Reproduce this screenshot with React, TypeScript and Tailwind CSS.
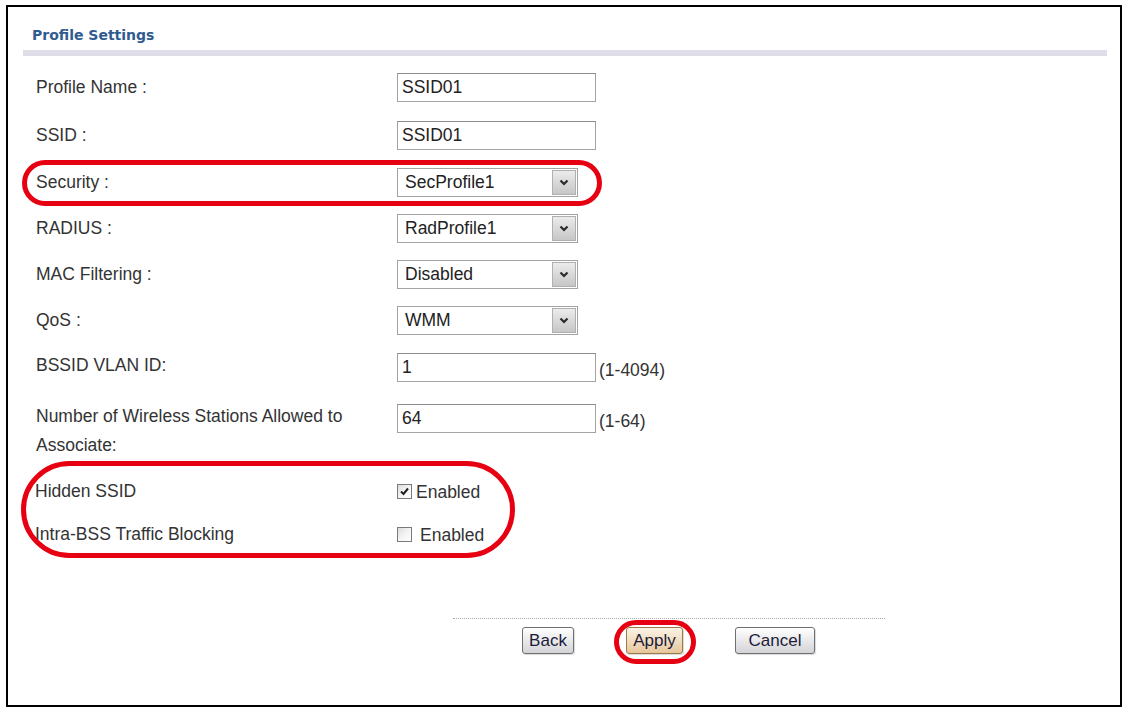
import React from "react";

const label = "w-[374px] shrink-0 pl-[13px] pr-[30px] leading-[29px] text-[#333]";

function TextBox({ value, note }: { value: string; note?: string }) {
  return (
    <div className="flex items-center">
      <div className="w-[199px] h-[29px] border border-[#a3a3a3] border-t-[#8c8c8c] bg-white pl-[4px] leading-[27px] text-[#222]">
        {value}
      </div>
      {note && <span className="ml-[3px] mt-[6px] text-[#333]">{note}</span>}
    </div>
  );
}

function Select({ value }: { value: string }) {
  return (
    <div className="w-[181px] h-[29px] border border-[#a3a3a3] bg-white flex items-center justify-between pl-[7px] pr-[1px]">
      <span className="text-[#222]">{value}</span>
      <span className="w-[24px] h-[25px] border border-[#b0b0b0] bg-gradient-to-b from-[#ececec] to-[#c6c6c6] flex items-center justify-center">
        <svg width="10" height="7" viewBox="0 0 10 7">
          <polyline points="1.5,1.5 5,5 8.5,1.5" fill="none" stroke="#2a2a2a" strokeWidth="2.2" />
        </svg>
      </span>
    </div>
  );
}

function CheckBox({ checked, gap }: { checked?: boolean; gap: string }) {
  return (
    <div className="flex items-center h-[29px]">
      <span className="w-[15px] h-[15px] border border-[#7a7a7a] bg-gradient-to-br from-[#dcdcdc] via-[#f4f4f4] to-white flex items-center justify-center">
        {checked && (
          <svg width="11" height="11" viewBox="0 0 11 11">
            <polyline points="2,5.5 4.5,8 9,2.5" fill="none" stroke="#222" strokeWidth="2" />
          </svg>
        )}
      </span>
      <span className={`${gap} text-[#333]`}>Enabled</span>
    </div>
  );
}

function PushButton({ text, width, apply }: { text: string; width: string; apply?: boolean }) {
  return (
    <button
      className={`${width} h-[27px] rounded-[3px] border text-[17px] leading-[25px] text-[#1c1c3a] shadow-[1px_1px_1px_rgba(0,0,0,0.15)] ${
        apply
          ? "border-[#9a7a4a] bg-gradient-to-b from-[#fbf3e6] to-[#e6c79a]"
          : "border-[#6f6f6f] bg-gradient-to-b from-[#ffffff] to-[#d4d4d8]"
      }`}
    >
      {text}
    </button>
  );
}

export default function App() {
  return (
    <div className="w-[1126px] h-[712px] bg-white overflow-hidden font-['Liberation_Sans',Arial,sans-serif] text-[17.5px]">
      <div className="relative ml-[6px] mt-[5px] w-[1116px] h-[702px] border-2 border-black pl-[15px] pr-[13px] pt-[20px]">
        <h1 className="pl-[9px] font-['DejaVu_Sans',Verdana,sans-serif] text-[14px] leading-[16px] font-bold text-[#2f5b91]">
          Profile Settings
        </h1>
        <div className="mt-[7px] h-[6px] bg-[#dedde8]" />

        <div className="flex flex-col">
          <div className="flex items-start mt-[17px]">
            <div className={label}>Profile Name :</div>
            <TextBox value="SSID01" />
          </div>
          <div className="flex items-start mt-[19px]">
            <div className={label}>SSID :</div>
            <TextBox value="SSID01" />
          </div>
          <div className="flex items-start mt-[18px]">
            <div className={label}>Security :</div>
            <Select value="SecProfile1" />
          </div>
          <div className="flex items-start mt-[17px]">
            <div className={label}>RADIUS :</div>
            <Select value="RadProfile1" />
          </div>
          <div className="flex items-start mt-[17px]">
            <div className={label}>MAC Filtering :</div>
            <Select value="Disabled" />
          </div>
          <div className="flex items-start mt-[17px]">
            <div className={label}>QoS :</div>
            <Select value="WMM" />
          </div>
          <div className="flex items-start mt-[16px]">
            <div className={label}>BSSID VLAN ID:</div>
            <TextBox value="1" note="(1-4094)" />
          </div>
          <div className="flex items-start mt-[19px]">
            <div className={label}>Number of Wireless Stations Allowed to Associate:</div>
            <TextBox value="64" note="(1-64)" />
          </div>
          <div className="flex items-start mt-[17px]">
            <div className="w-[374px] shrink-0 pl-[12px] leading-[29px] text-[#333]">Hidden SSID</div>
            <CheckBox checked gap="ml-[4px]" />
          </div>
          <div className="flex items-start mt-[14px]">
            <div className="w-[374px] shrink-0 pl-[12px] leading-[29px] text-[#333]">Intra-BSS Traffic Blocking</div>
            <CheckBox gap="ml-[8px]" />
          </div>
        </div>

        <div className="mt-[69px] ml-[430px] w-[432px] border-t border-dotted border-[#a8a8a8]" />
        <div className="flex gap-[52px] mt-[8px] ml-[499px]">
          <PushButton text="Back" width="w-[52px]" />
          <PushButton text="Apply" width="w-[57px]" apply />
          <PushButton text="Cancel" width="w-[80px]" />
        </div>

        {/* red callouts */}
        <div className="absolute left-[14px] top-[153px] w-[580px] h-[46px] rounded-full border-[5px] border-[#e60012]" />
        <div className="absolute left-[13px] top-[454px] w-[494px] h-[97px] rounded-full border-[5px] border-[#e60012]" />
        <div className="absolute left-[606px] top-[613px] w-[82px] h-[44px] rounded-full border-[5px] border-[#e60012]" />
      </div>
    </div>
  );
}
